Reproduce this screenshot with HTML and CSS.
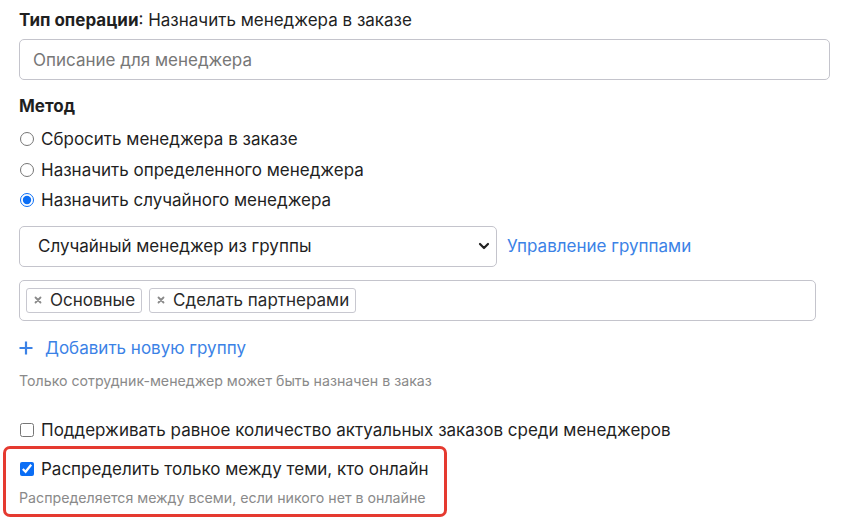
FILE: index.html
```html
<!DOCTYPE html>
<html lang="ru">
<head>
    <meta charset="UTF-8">
    <title>Назначить менеджера</title>
    <link rel="stylesheet" href="styles.css">
</head>
<body>
    <div class="form">
        <!-- Тип операции -->
        <div class="op-type"><b>Тип операции</b>: Назначить менеджера в заказе</div>
        <input class="text-input" type="text" placeholder="Описание для менеджера">

        <!-- Метод -->
        <div class="section-title">Метод</div>
        <div class="options">
            <label class="option"><input type="radio" name="method"> Сбросить менеджера в заказе</label>
            <label class="option"><input type="radio" name="method"> Назначить определенного менеджера</label>
            <label class="option"><input type="radio" name="method" checked> Назначить случайного менеджера</label>
        </div>

        <div class="select-row">
            <div class="select">
                <span>Случайный менеджер из группы</span>
                <svg width="12" height="8" viewBox="0 0 12 8"><path d="M2 2l4 4 4-4" fill="none" stroke="#222" stroke-width="2.2" stroke-linecap="round" stroke-linejoin="round"/></svg>
            </div>
            <a class="link" href="#">Управление группами</a>
        </div>

        <div class="tags">
            <span class="tag"><svg class="tag-x" width="8" height="8" viewBox="0 0 8 8"><path d="M1.5 1.5l5 5M6.5 1.5l-5 5" stroke="#8a8a8a" stroke-width="1.8" stroke-linecap="round"/></svg>Основные</span>
            <span class="tag"><svg class="tag-x" width="8" height="8" viewBox="0 0 8 8"><path d="M1.5 1.5l5 5M6.5 1.5l-5 5" stroke="#8a8a8a" stroke-width="1.8" stroke-linecap="round"/></svg>Сделать партнерами</span>
        </div>

        <a class="add-link" href="#"><svg class="plus" width="14" height="14" viewBox="0 0 14 14"><path d="M7 0.5v13M0.5 7h13" stroke="#3b82e6" stroke-width="2.2"/></svg>Добавить новую группу</a>
        <div class="hint">Только сотрудник-менеджер может быть назначен в заказ</div>

        <label class="option check-first"><input type="checkbox"> Поддерживать равное количество актуальных заказов среди менеджеров</label>

        <!-- Выделенный блок -->
        <div class="highlight">
            <label class="option"><input type="checkbox" checked> Распределить только между теми, кто онлайн</label>
            <div class="hint small-gap">Распределяется между всеми, если никого нет в онлайне</div>
        </div>
    </div>
</body>
</html>
```

FILE: styles.css
```css
/* Общие стили */
body {
    margin: 0;
    font-family: Inter, "Noto Sans", Arial, sans-serif;
    font-size: 17px;
    color: #1f1f1f;
    background: #ffffff;
}

.form {
    padding: 8px 12px 0 19px;
}

/* Тип операции */
.op-type {
    line-height: 24px;
}

.op-type b {
    font-weight: 700;
}

.text-input {
    display: block;
    box-sizing: border-box;
    width: 811px;
    height: 41px;
    margin-top: 7px;
    padding: 0 13px;
    border: 1px solid #c4c4cc;
    border-radius: 5px;
    font-family: inherit;
    font-size: 17px;
    color: #333;
}

.text-input::placeholder {
    color: #777777;
}

/* Метод */
.section-title {
    font-weight: 700;
    margin-top: 14px;
    line-height: 24px;
}

.options {
    margin-top: 6px;
}

.option {
    display: flex;
    align-items: center;
    height: 30.5px;
    line-height: 24px;
}

.option input {
    width: 14px;
    height: 14px;
    margin: 0 7px 0 1px;
    accent-color: #0b6ef5;
}

/* Выпадающий список */
.select-row {
    display: flex;
    align-items: center;
    margin-top: 10px;
}

.select {
    box-sizing: border-box;
    width: 478px;
    height: 41px;
    display: flex;
    align-items: center;
    justify-content: space-between;
    padding: 0 6px 0 18px;
    border: 1px solid #c4c4cc;
    border-radius: 5px;
}

.link {
    margin-left: 10px;
    color: #3b82e6;
    text-decoration: none;
}

/* Группы */
.tags {
    box-sizing: border-box;
    width: 797px;
    height: 41px;
    margin-top: 13px;
    padding: 7px 6px;
    display: flex;
    gap: 7px;
    border: 1px solid #c4c4cc;
    border-radius: 5px;
}

.tag {
    display: flex;
    align-items: center;
    padding: 0 6px 0 7px;
    border: 1px solid #c8c8d0;
    border-radius: 3px;
    line-height: 24px;
    color: #2a2a2a;
}

.tag-x {
    margin-right: 8px;
}

.add-link {
    display: flex;
    align-items: center;
    margin-top: 14px;
    line-height: 26px;
    color: #3b82e6;
    text-decoration: none;
}

.plus {
    margin-right: 12px;
}

.hint {
    margin-top: 10px;
    font-size: 14.2px;
    line-height: 20px;
    color: #8a8a8a;
}

.check-first {
    margin-top: 24px;
}

/* Красная рамка */
.highlight {
    box-sizing: border-box;
    width: 444px;
    margin: 1px 0 0 -16px;
    padding: 5px 0 6px 13px;
    border: 3px solid #e53a30;
    border-radius: 7px;
}

.small-gap {
    margin-top: 3px;
}
```
